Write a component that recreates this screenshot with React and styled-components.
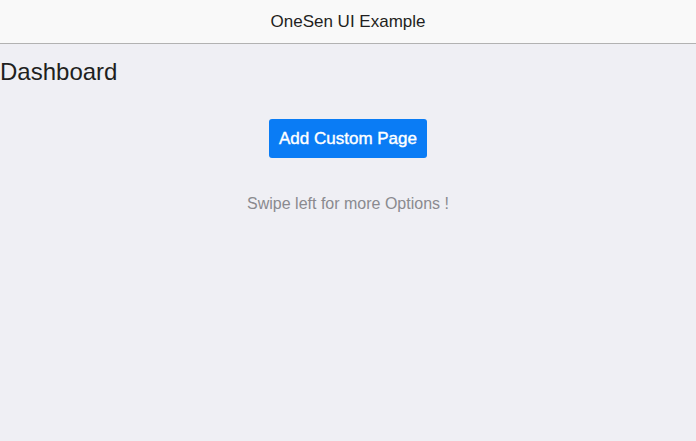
import styled, { createGlobalStyle } from 'styled-components';

const GlobalStyle = createGlobalStyle`
  html, body {
    margin: 0;
    padding: 0;
    height: 100%;
    background: #efeff4;
    font-family: "Liberation Sans", Arial, sans-serif;
  }
  #root {
    min-height: 100%;
  }
`;

// Top toolbar
const Toolbar = styled.header`
  height: 43px;
  background: #f9f9f9;
  border-bottom: 1px solid #b2b2b2;
  display: flex;
  align-items: center;
  justify-content: center;
  color: #1f1f21;
  font-size: 17px;
`;

const Page = styled.main`
  display: flex;
  flex-direction: column;
`;

const Heading = styled.h1`
  margin: 14px 0 0;
  font-size: 24px;
  font-weight: 400;
  color: #1f1f21;
  line-height: 28px;
`;

const Actions = styled.div`
  display: flex;
  flex-direction: column;
  align-items: center;
  padding-top: 33px;
`;

const PrimaryButton = styled.button`
  background: #0a7cf5;
  color: #fff;
  border: none;
  border-radius: 3px;
  height: 39px;
  padding: 0 10px;
  font-family: inherit;
  font-size: 17px;
  font-weight: 400;
  -webkit-text-stroke: 0.4px #fff;
  cursor: pointer;
`;

const Hint = styled.p`
  margin: 37px 0 0;
  color: #8a8a8f;
  font-size: 16px;
`;

export default function App() {
  return (
    <>
      <GlobalStyle />
      <Toolbar>OneSen UI Example</Toolbar>
      <Page>
        <Heading>Dashboard</Heading>
        <Actions>
          <PrimaryButton type="button">Add Custom Page</PrimaryButton>
          <Hint>Swipe left for more Options !</Hint>
        </Actions>
      </Page>
    </>
  );
}
